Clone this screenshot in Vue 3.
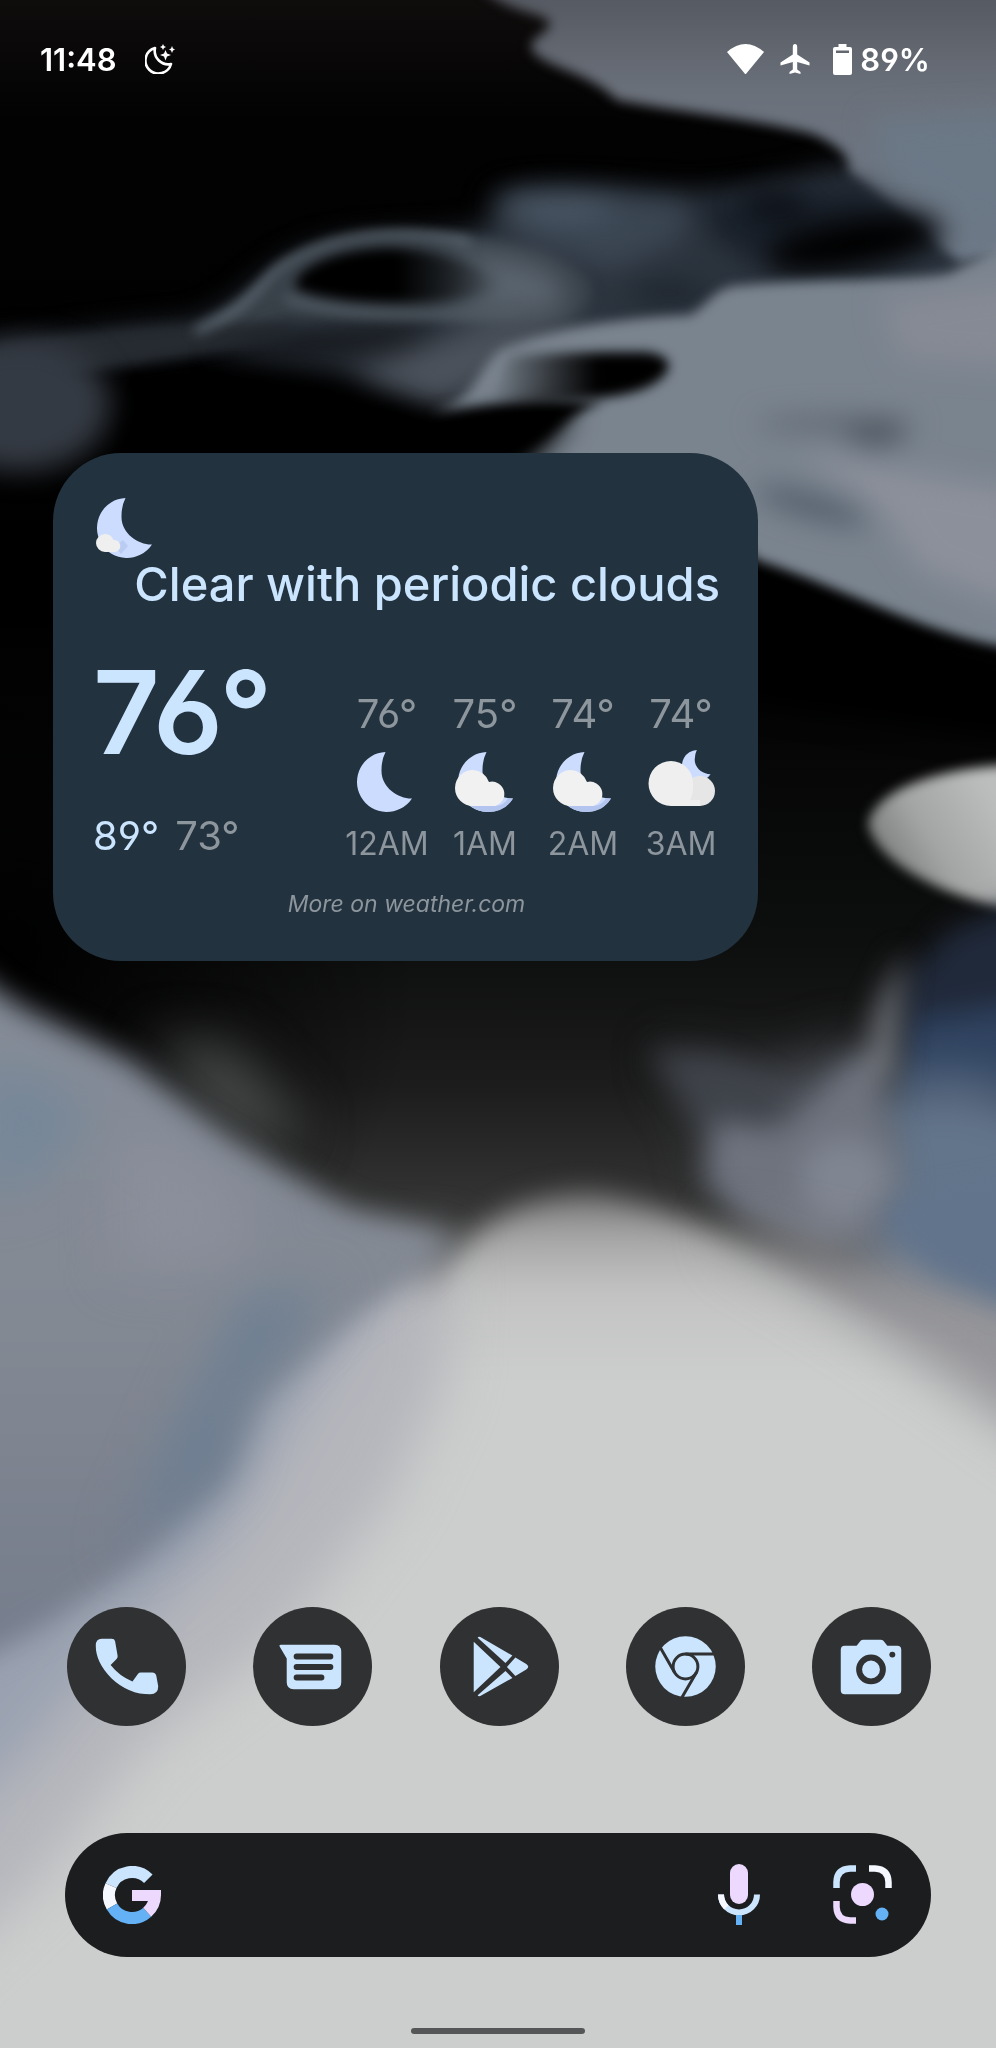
<template>
    <main class="screen">
        <svg class="wallpaper" viewBox="0 0 996 2048" preserveAspectRatio="xMidYMid slice" aria-hidden="true">
            <defs>
                <filter id="soft" filterUnits="userSpaceOnUse" x="-100" y="-100" width="1200" height="2300" color-interpolation-filters="sRGB"><feGaussianBlur stdDeviation="6" /></filter>
                <filter id="blur" filterUnits="userSpaceOnUse" x="-100" y="-100" width="1200" height="2300" color-interpolation-filters="sRGB"><feGaussianBlur stdDeviation="14" /></filter>
                <filter id="haze" filterUnits="userSpaceOnUse" x="-100" y="-100" width="1200" height="2300" color-interpolation-filters="sRGB"><feGaussianBlur stdDeviation="26" /></filter>
                <linearGradient id="sky" x1="0" y1="0" x2="0" y2="1">
                    <stop offset="0" stop-color="#0f0c0c" />
                    <stop offset="0.06" stop-color="#020202" />
                    <stop offset="0.3" stop-color="#000" />
                    <stop offset="0.46" stop-color="#0d0e0e" />
                    <stop offset="0.53" stop-color="#1b1c1b" />
                    <stop offset="0.6" stop-color="#383938" />
                </linearGradient>
                <radialGradient id="night" gradientUnits="userSpaceOnUse" cx="0" cy="960" r="420">
                    <stop offset="0" stop-color="#000" />
                    <stop offset="1" stop-color="#000" stop-opacity="0" />
                </radialGradient>
                <linearGradient id="upper" gradientUnits="userSpaceOnUse" x1="0" y1="0" x2="0" y2="270">
                    <stop offset="0" stop-color="#565a62" />
                    <stop offset="0.35" stop-color="#6b717b" />
                    <stop offset="1" stop-color="#6f7b8a" />
                </linearGradient>
                <linearGradient id="pebble" gradientUnits="userSpaceOnUse" x1="866" y1="880" x2="996" y2="800">
                    <stop offset="0" stop-color="#696c6b" />
                    <stop offset="0.5" stop-color="#a3a5a4" />
                    <stop offset="1" stop-color="#bcbdbd" />
                </linearGradient>
                <linearGradient id="dome" gradientUnits="userSpaceOnUse" x1="0" y1="1185" x2="0" y2="1380">
                    <stop offset="0" stop-color="#6c6e6c" />
                    <stop offset="0.25" stop-color="#a3a4a3" />
                    <stop offset="0.55" stop-color="#c2c3c2" />
                    <stop offset="1" stop-color="#cccecd" />
                </linearGradient>
                <linearGradient id="slope" gradientUnits="userSpaceOnUse" x1="0" y1="1000" x2="0" y2="1650">
                    <stop offset="0" stop-color="#858c98" />
                    <stop offset="0.5" stop-color="#838993" />
                    <stop offset="1" stop-color="#757c8b" />
                </linearGradient>
                <linearGradient id="hollow" x1="0" y1="0" x2="1" y2="0">
                    <stop offset="0" stop-color="#000" stop-opacity="0" />
                    <stop offset="0.6" stop-color="#000" />
                </linearGradient>
                <linearGradient id="crater" x1="0" y1="0" x2="1" y2="0">
                    <stop offset="0.5" stop-color="#000" />
                    <stop offset="1" stop-color="#000" stop-opacity="0" />
                </linearGradient>
            </defs>
            <rect width="996" height="2048" fill="url(#sky)" />
            <rect width="500" height="1300" fill="url(#night)" />

            <!-- upper ridge -->
            <g filter="url(#blur)">
                <path fill="#2c343e" d="M492 208C490 190 520 186 580 188C650 190 690 198 740 190L840 168L1020 200V320L700 340L450 400L330 370L210 345L-20 372V352C40 340 120 328 190 324C250 306 260 262 330 244C390 232 440 240 492 226Z" />
            </g>
            <g filter="url(#soft)">
                <path fill="url(#upper)" d="M475 -20C500 14 550 12 550 24C545 36 528 38 532 50C545 68 590 72 617 100C680 112 760 120 812 134C842 146 852 160 848 172C890 200 930 240 960 262L1030 250V-20Z" />
                <path fill="#394149" d="M190 326C235 310 255 285 278 268C340 228 430 226 540 250C600 275 610 300 560 320L420 322L300 325Z" />
                <path fill="#262b31" d="M-20 354C60 335 130 328 200 325L300 320L250 345L160 360L-20 385Z" />
            </g>
            <g filter="url(#blur)">
                <path fill="#3b4653" d="M500 208C498 194 540 192 590 194L690 204L680 240L610 270L530 240Z" />
                <ellipse cx="560" cy="208" rx="56" ry="12" fill="#4c5967" />
                <path fill="#6b7886" d="M870 120L1020 110V250L960 225L890 180Z" />
                <path fill="#1a212b" d="M700 200L860 185L950 240L890 250L750 262L710 236Z" />
                <path fill="#59636d" d="M440 252C520 246 580 275 566 304C540 322 480 318 440 304L490 280Z" />
                <ellipse cx="670" cy="293" rx="42" ry="9" fill="#19202a" />
                <path fill="#4c525b" d="M480 326L600 322L520 365L440 404L350 372Z" />
                <path fill="#15181c" d="M210 356L300 330L450 322L400 350L300 362Z" />
                <ellipse cx="20" cy="405" rx="90" ry="66" fill="#343a43" />
            </g>
            <g filter="url(#blur)">
                <ellipse cx="852" cy="244" rx="88" ry="24" fill="#000" transform="rotate(-10 852 244)" />
                <ellipse cx="775" cy="206" rx="34" ry="11" fill="#080b10" />
                <path fill="#000" d="M160 390C250 380 330 382 360 398C390 414 410 428 440 428L560 412L600 410L490 480H140Z" />
            </g>
            <g filter="url(#soft)">
                <path fill="none" stroke="#66717b" stroke-width="6" d="M195 332C250 310 258 285 278 268C330 232 400 226 470 242" />
                <path fill="none" stroke="#525b64" stroke-width="8" d="M285 298C340 318 450 318 520 308" />
                <path fill="url(#crater)" d="M296 288C292 268 340 248 390 248C450 250 500 274 500 290C450 308 330 306 296 288Z" />
            </g>

            <!-- bright plateau -->
            <g filter="url(#soft)">
                <path fill="#7a848f" d="M430 412C478 398 475 372 500 350C540 334 590 320 690 315C710 304 712 290 735 286C820 278 920 282 950 274L1020 235V650C930 638 850 590 757 560L700 500L500 460C560 440 565 412 605 402C540 400 490 404 430 412Z" />
            </g>
            <g filter="url(#blur)">
                <path fill="#000" d="M740 586C850 614 920 654 1040 674L1020 740L740 700Z" />
                <path fill="#000" d="M380 440L540 408L575 412L520 480H350Z" />
                <path fill="#868a94" d="M880 300L1020 280V370L900 360Z" />
                <ellipse cx="836" cy="424" rx="80" ry="8" fill="#5e666f" />
                <ellipse cx="876" cy="434" rx="30" ry="11" fill="#4c535d" />
                <ellipse cx="812" cy="506" rx="58" ry="11" fill="#4f5b68" transform="rotate(16 812 506)" />
                <path fill="#8c909a" d="M800 450L900 470L1020 490V610L920 570L880 510Z" />
            </g>
            <g filter="url(#soft)">
                <path fill="url(#hollow)" d="M510 356C560 352 610 352 645 352C682 356 672 378 640 390C610 400 560 402 490 404Z" />
            </g>

            <!-- floating pebble -->
            <g filter="url(#soft)">
                <path fill="url(#pebble)" d="M868 824C874 792 930 768 1020 764V912C940 896 876 862 868 824Z" />
            </g>

            <!-- distant blue rocks -->
            <g filter="url(#blur)">
                <path fill="#20293a" d="M905 980L950 930L1030 900V1180H890Z" />
                <path fill="#2f425f" d="M910 1020L1040 1000V1100H900Z" />
            </g>
            <g filter="url(#haze)">
                <path fill="#63758b" d="M860 1090L960 1075L1060 1110V1370L880 1290L840 1200Z" />
                <path fill="#4a4e56" d="M660 1050C700 1065 750 1075 800 1062L860 1040L880 1150L800 1220L715 1175L700 1110Z" />
            </g>
            <g filter="url(#blur)">
                <path fill="#3f434a" d="M648 1050L720 1060L780 1090L740 1180L705 1120Z" />
                <path fill="#6e737e" d="M715 1120L780 1130L860 1050L890 1120L905 1180L880 1240L820 1250L740 1215L705 1180Z" />
                <ellipse cx="845" cy="1180" rx="45" ry="42" fill="#7f8591" />
                <path fill="#70747b" d="M875 1010L904 950L895 1080L860 1090Z" />
            </g>
            <g filter="url(#haze)">
                <path fill="#484b4a" d="M150 1040L230 1045L300 1120L290 1150L220 1130Z" />
            </g>

            <!-- foreground dome -->
            <path filter="url(#blur)" fill="url(#dome)" d="M430 1290C470 1214 540 1194 590 1194C700 1206 800 1290 1040 1350V2160H-90V1500Z" />
            <path filter="url(#haze)" fill="#96969a" d="M720 1222L1060 1300V1460C950 1380 850 1310 740 1250Z" />
            <path filter="url(#blur)" fill="#62748c" d="M880 1210L1040 1180V1320L930 1270Z" />

            <!-- left slope -->
            <g filter="url(#haze)">
                <path fill="#b5b6bc" d="M-60 1400L450 1240L446 1380L390 1500L280 1640L150 1740L40 1880L-90 2000Z" />
                <path fill="#9aa2b1" d="M0 1300L410 1240L320 1370L220 1540L120 1640L20 1760L-90 1850Z" />
            </g>
            <path filter="url(#blur)" fill="url(#slope)" d="M-60 950L20 1006L130 1060L230 1138L350 1209L456 1238L410 1280L340 1330L260 1400L225 1480L130 1570L40 1630L-60 1680Z" />
            <g filter="url(#haze)">
                <path fill="#758799" d="M-20 1060L90 1100L50 1170L-20 1200Z" />
                <path fill="#6a7d92" d="M245 1300L330 1290L240 1400L225 1470L120 1560L170 1450Z" />
                <path fill="#8b8f9b" d="M120 1120L230 1180L250 1260L120 1270Z" />
            </g>
        </svg>

        <div class="home">
            <header class="status">
                <time class="clock">11:48</time>
                <svg class="status-icon dnd" viewBox="0 0 30 30" aria-label="Bedtime mode">
                    <path d="M10 4A13 13 0 1 0 26 20C17 22 8 14 10 4Z" fill="none" stroke="#fff" stroke-width="2.6" stroke-linejoin="round" />
                    <path d="M20.500 6L22 9.500L26 11L22 12.500L20.500 16.500L19 12.500L15 11L19 9.500ZM18 0L19 2L21 3L19 4L18 6L17 4L15 3L17 2ZM27 2L28 4.500L30 5.500L28 6.500L27 9L26 6.500L24 5.500L26 4.500Z" fill="#fff" />
                </svg>
                <div class="status-right">
                    <svg class="status-icon wifi" viewBox="0 0 37 30" aria-label="Wi-Fi"><path d="M0 8Q18.500 -8 37 8L18.500 30.500Z" fill="#fff" /></svg>
                    <svg class="status-icon" viewBox="0 0 30 30" aria-label="Airplane mode"><path d="M15 0Q17.200 0 17.200 3V10.500L29.500 18.500V21.500L17.200 18V25.500L20.500 28V30L15 28.500L9.500 30V28L12.800 25.500V18L0.500 21.500V18.500L12.800 10.500V3Q12.800 0 15 0Z" fill="#fff" /></svg>
                    <svg class="status-icon battery" viewBox="0 0 19 31" aria-label="Battery">
                        <path fill="#fff" fill-rule="evenodd" d="M5.500 0H13.500V3H17Q19 3 19 5V29Q19 31 17 31H2Q0 31 0 29V5Q0 3 2 3H5.500ZM3 6.500V9H16V6.500Z" />
                    </svg>
                    <span class="level">89%</span>
                </div>
            </header>

            <section class="weather">
                <svg class="now-icon" viewBox="0 0 60 62" aria-hidden="true">
                    <path :d="moon" transform="translate(2 0)" fill="#cbdcfe" />
                    <path d="M20 48L28 42L33 48L26 56Z" fill="#b3c5ee" opacity="0.7" />
                    <path d="M10 36A9 9 0 0 1 18.500 42A6 6 0 1 1 20 54H10A9 9 0 0 1 10 36Z" fill="#efefef" />
                </svg>
                <h1 class="condition">Clear with periodic clouds</h1>
                <div class="forecast">
                    <div class="today">
                        <p class="now">76°</p>
                        <p class="range"><span class="high">89°</span><span>73°</span></p>
                    </div>
                    <ul class="hours">
                        <li v-for="hour in hours" :key="hour.time">
                            <span class="temp">{{ hour.temp }}</span>
                            <svg class="sky-icon" viewBox="0 0 68 62" aria-hidden="true">
                                <path v-if="hour.sky === 'clear'" :d="moon" transform="translate(4 2)" fill="#cbdcfe" />
                                <template v-else-if="hour.sky === 'partly'">
                                    <path :d="moon" transform="translate(7 2)" fill="#cbdcfe" />
                                    <path d="M20 56H44Q54 55 57 48L62 48.500Q54 62 37 62Q27 62 20 56Z" fill="#b3c5ee" />
                                    <path d="M22 20A18 18 0 0 1 38 32A12 12 0 1 1 44 56H22A18 18 0 0 1 22 20Z" fill="#f1f1f1" />
                                </template>
                                <template v-else>
                                    <path :d="moon" transform="translate(35 0) scale(0.52)" fill="#cbdcfe" />
                                    <circle cx="53" cy="41" r="15" fill="#e6e6e6" />
                                    <path d="M24 11A22 22 0 0 1 46 33Q47 46 40 56H24A22 22 0 0 1 24 11ZM24 50H53V56H24Z" fill="#efefef" />
                                </template>
                            </svg>
                            <span class="time">{{ hour.time }}</span>
                        </li>
                    </ul>
                </div>
                <a class="more" href="#">More on weather.com</a>
            </section>

            <nav class="dock">
                <a v-for="app in apps" :key="app.name" href="#" class="app" :aria-label="app.name">
                    <svg viewBox="0 0 120 120" fill="#cbe5ff">
                        <path v-if="app.name === 'Phone'" d="M35 32H45Q48 32 48.500 34.500L51 49Q51.500 51 50 52.500L44 58.500Q53 70 66 75L71.500 67.500Q72.500 66 74.500 66H86Q89 66 90 69L92 80Q92 88 84 88Q62 88 45 72Q29 56 29 39Q29 32 35 32Z" />
                        <template v-else-if="app.name === 'Messages'">
                            <path d="M28 38H82Q89 38 89 45V76Q89 83 82 83H41Q34 83 34 76V52L27 40Q26 38 28 38Z" />
                            <path d="M44 50H78M44 60.500H78M44 71H69" stroke="#2f3132" stroke-width="6" stroke-linecap="round" />
                        </template>
                        <path v-else-if="app.name === 'Play Store'" d="M34 35L61 60.500L34 86ZM38 31Q39 29 42 31L73 49L66 56.500ZM38 89Q39 91 42 89L73 71.500L66 64.500ZM76 51L87 57.500Q91 60.500 87 63L76 69.500L67.500 60.500Z" />
                        <template v-else-if="app.name === 'Chrome'">
                            <circle cx="60" cy="60" r="30.500" />
                            <g fill="none" stroke="#2f3132" stroke-width="3">
                                <circle cx="60" cy="60" r="12.500" />
                                <path d="M60 47.500H90M49 66L35 41.500M71 66L56.500 91" />
                            </g>
                        </template>
                        <template v-else>
                            <path d="M33 39H45L49 34Q50 33 52 33H69Q71 33 72 34L76 39H86Q90 39 90 43V84Q90 88 86 88H33Q29 88 29 84V43Q29 39 33 39Z" />
                            <circle cx="59.500" cy="63" r="12" fill="none" stroke="#2f3132" stroke-width="6" />
                            <circle cx="81" cy="48" r="3" fill="#2f3132" />
                        </template>
                    </svg>
                </a>
            </nav>

            <form class="search" role="search" @submit.prevent>
                <svg class="logo" viewBox="0 0 58 58" fill="none" stroke-width="12" aria-hidden="true">
                    <path d="M45.300 12.700A23 23 0 0 0 8 19.600" stroke="#cbe5ff" />
                    <path d="M8 19.600A23 23 0 0 0 9 40.500" stroke="#f5f8ff" />
                    <path d="M9 40.500A23 23 0 0 0 44.200 46.300" stroke="#65b1f6" />
                    <path d="M44.200 46.300A23 23 0 0 0 52 29" stroke="#ecd9fd" />
                    <path d="M29 24H58V29L46 35H29Z" fill="#ecd9fd" />
                </svg>
                <input v-model="query" class="query" type="text" aria-label="Search" />
                <button class="tool" type="button" aria-label="Voice search">
                    <svg width="42" height="62" viewBox="0 0 42 62">
                        <rect x="12" width="18" height="40" rx="9" fill="#ecd9fd" />
                        <path d="M3 30.500A18 18 0 0 0 39 30.500" fill="none" stroke="#cbe5ff" stroke-width="6" />
                        <path d="M3 30.500A18 18 0 0 0 8.300 43.300" fill="none" stroke="#f5f8ff" stroke-width="6" />
                        <path d="M18 51H24V61H18Z" fill="#65b1f6" />
                    </svg>
                </button>
                <button class="tool" type="button" aria-label="Google Lens">
                    <svg width="60" height="60" viewBox="0 0 60 60" fill="none" stroke-width="6.500">
                        <path d="M3.500 23V17Q4 4 17 3.500H23" stroke="#cbe5ff" />
                        <path d="M36 3.500H42Q55 4 55.500 17V23" stroke="#f5f8ff" />
                        <path d="M3.500 36V42Q4 55 17 55.500H23" stroke="#ecd9fd" />
                        <circle cx="29.500" cy="29.500" r="11.500" fill="#ecd9fd" />
                        <circle cx="49" cy="49" r="6.500" fill="#65b1f6" />
                    </svg>
                </button>
            </form>

            <div class="handle"></div>
        </div>
    </main>
</template>

<script setup>
import { ref } from 'vue'

const query = ref('')

// crescent shared by every night icon
const moon = 'M28.5 0A30 30 0 1 0 55 46.5C42 47 24 36 24.5 18Q24.5 8 28.5 0Z'

const hours = [
    { time: '12AM', temp: '76°', sky: 'clear' },
    { time: '1AM', temp: '75°', sky: 'partly' },
    { time: '2AM', temp: '74°', sky: 'partly' },
    { time: '3AM', temp: '74°', sky: 'cloudy' }
]

const apps = [
    { name: 'Phone' },
    { name: 'Messages' },
    { name: 'Play Store' },
    { name: 'Chrome' },
    { name: 'Camera' }
]
</script>

<style>
body {
    margin: 0;
    background: #000;
}
</style>

<style scoped>
* {
    box-sizing: border-box;
}

/* wallpaper and home share one grid cell */
.screen {
    display: grid;
    grid-template-columns: 100%;
    min-height: 100vh;
    overflow: hidden;
    color: #fff;
    font-family: Inter, "Liberation Sans", sans-serif;
    font-feature-settings: "cv03", "cv04";
}

.wallpaper,
.home {
    grid-area: 1 / 1;
}

.wallpaper {
    width: 100%;
    height: 100%;
}

.home {
    position: relative;
    display: flex;
    flex-direction: column;
    padding: 0 65px 14px;
}

.status {
    display: flex;
    align-items: center;
    height: 118px;
    margin: 0 -25px;
    font-size: 31px;
    font-weight: 600;
}

.status-icon {
    width: 30px;
    height: 30px;
}

.dnd {
    margin-left: 28px;
}

.status-right {
    display: flex;
    align-items: center;
    margin-left: auto;
    margin-right: 26px;
}

.wifi {
    width: 37px;
    margin-right: 16px;
}

.battery {
    width: 19px;
    height: 31px;
    margin: 0 8px 0 23px;
}

.weather {
    display: flex;
    flex-direction: column;
    width: 705px;
    max-width: 100%;
    height: 508px;
    margin: 335px 0 0 -12px;
    padding: 45px 38px 30px 40px;
    border-radius: 68px;
    background: #22323e;
    color: #8d959d;
}

.now-icon {
    width: 60px;
    height: 62px;
    margin-left: 2px;
}

.condition {
    margin: 0;
    color: #cbe5ff;
    font-size: 47px;
    font-weight: 500;
    line-height: 48px;
    text-align: right;
    white-space: nowrap;
}

.forecast {
    display: flex;
    justify-content: space-between;
    margin-top: 40px;
}

.now {
    margin: 0;
    color: #cbe5ff;
    font-size: 116px;
    font-weight: 600;
    line-height: 128px;
}

.range {
    display: flex;
    gap: 16px;
    margin: 36px 0 0;
    font-size: 40px;
    line-height: 48px;
}

.high {
    color: #cbe5ff;
}

.hours {
    display: grid;
    grid-template-columns: repeat(4, 98px);
    margin: 42px -10px 0 0;
    padding: 0;
    list-style: none;
}

.hours li {
    display: flex;
    flex-direction: column;
    align-items: center;
}

.temp {
    font-size: 40px;
    line-height: 48px;
}

.sky-icon {
    width: 68px;
    height: 62px;
    margin: 12px 0;
}

.time {
    font-size: 32px;
    line-height: 40px;
}

.more {
    align-self: center;
    margin-top: 24px;
    color: #8d959d;
    font-size: 23px;
    font-style: italic;
    line-height: 32px;
    text-decoration: none;
}

.dock {
    display: flex;
    justify-content: space-between;
    margin: auto 0 0 2px;
}

.app {
    width: 119px;
    height: 119px;
    border-radius: 50%;
    background: #2f3132;
}

.app svg {
    display: block;
}

.search {
    display: flex;
    align-items: center;
    height: 124px;
    margin-top: 107px;
    padding: 0 38px;
    border-radius: 62px;
    background: #1b1d1e;
}

.logo {
    width: 58px;
    height: 58px;
}

.query {
    flex: 1;
    min-width: 0;
    height: 60px;
    margin: 0 24px;
    border: 0;
    outline: 0;
    background: transparent;
    color: #fff;
    font: inherit;
    font-size: 32px;
}

.tool {
    display: flex;
    padding: 0;
    border: 0;
    background: transparent;
    cursor: pointer;
}

.tool + .tool {
    margin-left: 73px;
}

.handle {
    align-self: center;
    width: 174px;
    height: 6px;
    margin-top: 71px;
    border-radius: 3px;
    background: #555657;
}
</style>
